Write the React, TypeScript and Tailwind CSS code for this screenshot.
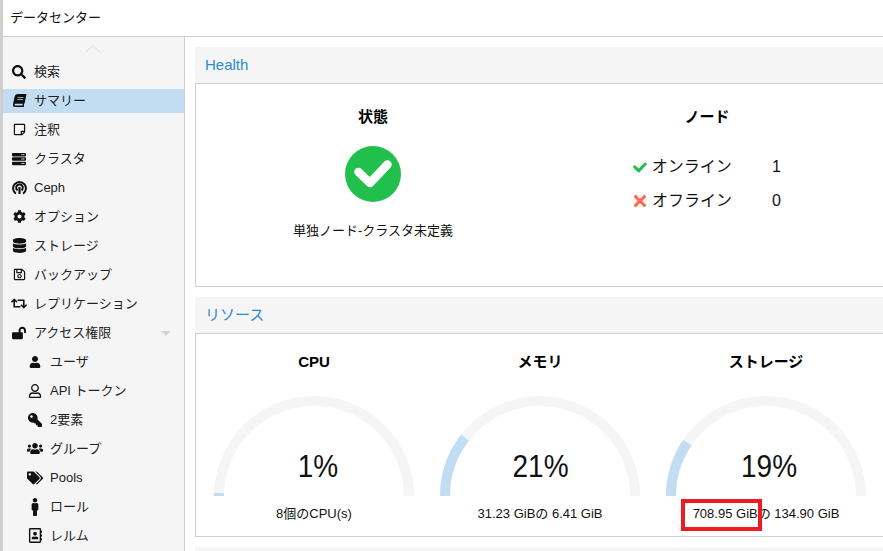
import type { ReactNode } from 'react';
import {
  FaBook,
  FaCog,
  FaDatabase,
  FaKey,
  FaLockOpen,
  FaMale,
  FaRegAddressBook,
  FaRegSave,
  FaRegStickyNote,
  FaRegUser,
  FaRetweet,
  FaSearch,
  FaServer,
  FaTags,
  FaTimes,
  FaUser,
  FaUsers,
} from 'react-icons/fa';

const fontStack = "font-['Liberation_Sans','Noto_Sans_CJK_JP',sans-serif]";

function CephIcon() {
  return (
    <svg viewBox="0 0 15 15" className="h-[15px] w-[15px]" fill="none" stroke="currentColor" strokeWidth="2">
      <path d="M3.9 13.6 A6.4 6.4 0 1 1 11.1 13.6" />
      <path d="M5.6 10.4 A3.3 3.3 0 1 1 9.4 10.4" />
      <path d="M7.5 7 V14" strokeWidth="2.2" />
    </svg>
  );
}

function CheckMark({ className }: { className: string }) {
  return (
    <svg viewBox="0 0 38 28" className={className} fill="none" stroke="currentColor" strokeWidth="8.5" strokeLinecap="round" strokeLinejoin="round">
      <path d="M4.5 12 L16 23 L33.5 4.5" />
    </svg>
  );
}

type NavItem = {
  label: string;
  icon: ReactNode;
  sub?: boolean;
  active?: boolean;
  caret?: boolean;
};

const navItems: NavItem[] = [
  { label: '検索', icon: <FaSearch size={14} /> },
  { label: 'サマリー', icon: <FaBook size={13} className="-skew-x-12" />, active: true },
  { label: '注釈', icon: <FaRegStickyNote size={13} /> },
  { label: 'クラスタ', icon: <FaServer size={14} /> },
  { label: 'Ceph', icon: <CephIcon /> },
  { label: 'オプション', icon: <FaCog size={13} /> },
  { label: 'ストレージ', icon: <FaDatabase size={15} /> },
  { label: 'バックアップ', icon: <FaRegSave size={13} /> },
  { label: 'レプリケーション', icon: <FaRetweet size={17} /> },
  { label: 'アクセス権限', icon: <FaLockOpen size={14} />, caret: true },
  { label: 'ユーザ', icon: <FaUser size={12} />, sub: true },
  { label: 'API トークン', icon: <FaRegUser size={14} />, sub: true },
  { label: '2要素', icon: <FaKey size={14} className="-scale-x-100" />, sub: true },
  { label: 'グループ', icon: <FaUsers size={17} />, sub: true },
  { label: 'Pools', icon: <FaTags size={16} />, sub: true },
  { label: 'ロール', icon: <FaMale size={18} />, sub: true },
  { label: 'レルム', icon: <FaRegAddressBook size={15} />, sub: true },
];

function NavRow({ item }: { item: NavItem }) {
  return (
    <div
      className={`relative my-[2.5px] flex h-[24px] shrink-0 items-center text-[13px] text-[#222] ${
        item.active ? 'bg-[#c2ddf2]' : ''
      } ${item.sub ? 'pl-[24px]' : 'pl-[8px]'}`}
    >
      <span className="flex w-[16px] justify-center text-[#111]">{item.icon}</span>
      <span className="ml-[7px] whitespace-nowrap">{item.label}</span>
      {item.caret && (
        <span className="absolute right-[13px] top-[10px] h-0 w-0 border-x-[5px] border-t-[5px] border-x-transparent border-t-[#d4d4d4]" />
      )}
    </div>
  );
}

function Panel({ title, children }: { title: string; children: ReactNode }) {
  return (
    <section className="w-[720px] shrink-0">
      <h2 className="flex h-[36px] items-center bg-[#f5f5f5] pl-[10px] text-[15px] font-normal text-[#2a8ad4]">
        {title}
      </h2>
      <div className="h-[204px] border border-[#cfcfcf] bg-white">{children}</div>
    </section>
  );
}

function Gauge({ percent }: { percent: number }) {
  const angle = Math.PI * (percent / 100);
  const x = 100 - 95 * Math.cos(angle);
  const y = 100 - 95 * Math.sin(angle);
  return (
    <svg viewBox="0 0 200 100" className="h-[100px] w-[200px]" fill="none" strokeWidth="10">
      <path d="M5 100 A95 95 0 0 1 195 100" stroke="#f5f5f5" />
      <path d={`M5 100 A95 95 0 0 1 ${x} ${y}`} stroke="#c2ddf2" />
    </svg>
  );
}

function ResourceColumn({
  title,
  percent,
  percentOffset,
  caption,
  highlight,
}: {
  title: string;
  percent: number;
  percentOffset: string;
  caption: string;
  highlight?: boolean;
}) {
  return (
    <div className="relative flex w-[226px] shrink-0 flex-col items-center">
      <h3 className="mt-[18px] text-[15px] leading-[20px] font-bold text-black">{title}</h3>
      <div className="relative mt-[24px]">
        <Gauge percent={percent} />
        <span
          className={`absolute inset-x-0 top-[53px] scale-y-[1.12] text-center text-[28px] leading-[36px] text-[#111] ${percentOffset}`}
        >
          {percent}%
        </span>
      </div>
      <p className="mt-[9px] whitespace-nowrap text-[13px] leading-[18px] text-[#111]">{caption}</p>
      {highlight && (
        <span className="absolute left-[28px] top-[165px] h-[32px] w-[81px] border-4 border-[#ed1c24]" />
      )}
    </div>
  );
}

export default function App() {
  return (
    <div className={`flex h-[551px] w-[883px] overflow-hidden bg-white ${fontStack}`}>
      <div className="w-[3px] shrink-0 bg-[#cfcfcf]" />
      <div className="flex min-w-0 flex-1 flex-col">
        <header className="flex h-[37px] shrink-0 items-center border-b border-[#cfcfcf] pl-[7px] text-[13px] text-[#111]">
          データセンター
        </header>
        <div className="flex min-h-0 flex-1">
          <nav className="flex w-[182px] shrink-0 flex-col overflow-hidden border-r border-[#cfcfcf] bg-[#f5f5f5]">
            <div className="flex h-[20px] shrink-0 justify-center pt-[8px] pr-[2px]">
              <svg viewBox="0 0 16 8" className="h-[8px] w-[16px]" fill="none" stroke="#dcdcdc" strokeWidth="1">
                <path d="M0.5 7.5 L8 0.7 L15.5 7.5" />
              </svg>
            </div>
            {navItems.map((item) => (
              <NavRow key={item.label} item={item} />
            ))}
          </nav>
          <main className="flex min-w-0 flex-1 flex-col gap-[10px] overflow-hidden pl-[10px] pt-[10px]">
            <Panel title="Health">
              <div className="flex pl-[10px]">
                <div className="flex w-[334px] flex-col items-center">
                  <h3 className="mt-[23px] text-[15px] leading-[20px] font-bold text-black">状態</h3>
                  <div className="mt-[19px] flex h-[56px] w-[56px] items-center justify-center rounded-full bg-[#21bf4b] text-white">
                    <CheckMark className="h-[28px] w-[38px]" />
                  </div>
                  <p className="mt-[20px] text-[13px] leading-[18px] text-[#111]">単独ノード-クラスタ未定義</p>
                </div>
                <div className="flex w-[334px] flex-col items-center">
                  <h3 className="mt-[23px] text-[15px] leading-[20px] font-bold text-black">ノード</h3>
                  <div className="mt-[23px] flex w-[148px] items-center text-[16px] leading-[34px] text-[#111]">
                    <CheckMark className="h-[11px] w-[14px] text-[#21bf4b]" />
                    <span className="ml-[5px] w-[122px]">オンライン</span>
                    <span>1</span>
                  </div>
                  <div className="flex w-[148px] items-center text-[16px] leading-[34px] text-[#111]">
                    <span className="flex w-[14px] justify-center text-[#ff6c59]">
                      <FaTimes size={18} />
                    </span>
                    <span className="ml-[5px] w-[122px]">オフライン</span>
                    <span>0</span>
                  </div>
                </div>
              </div>
            </Panel>
            <Panel title="リソース">
              <div className="flex pl-[5px]">
                <ResourceColumn title="CPU" percent={1} percentOffset="pl-[8px]" caption="8個のCPU(s)" />
                <ResourceColumn title="メモリ" percent={21} percentOffset="pl-[1px]" caption="31.23 GiBの 6.41 GiB" />
                <ResourceColumn
                  title="ストレージ"
                  percent={19}
                  percentOffset="pl-[6px]"
                  caption="708.95 GiBの 134.90 GiB"
                  highlight
                />
              </div>
            </Panel>
            <div className="h-[20px] w-[720px] shrink-0 bg-[#f5f5f5]" />
          </main>
        </div>
      </div>
    </div>
  );
}
